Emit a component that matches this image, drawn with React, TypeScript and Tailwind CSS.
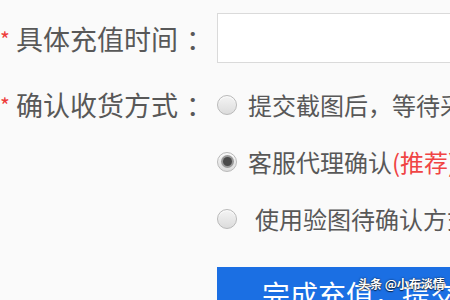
import React from "react";

function Radio({ checked }: { checked?: boolean }) {
  return (
    <span className="relative flex h-[20px] w-[20px] shrink-0 items-center justify-center rounded-full border border-[#b9b9b9] bg-[linear-gradient(180deg,#f4f4f4,#dcdcdc)] shadow-[inset_0_1px_1px_rgba(255,255,255,0.8)]">
      {checked && <span className="h-[9px] w-[9px] rounded-full bg-[#4a4a4a] shadow-[0_0_0_2px_#9a9a9a]" />}
    </span>
  );
}

function Label({ text }: { text: string }) {
  return (
    <div className="flex items-center whitespace-nowrap">
      <span className="w-[16px] translate-y-[1px] text-[21px] leading-none text-[#ee3b3b]">*</span>
      <span className="text-[27px] leading-none text-[#585858]">{text}</span>
      <span className="pl-[8px] text-[27px] leading-none text-[#585858]">：</span>
    </div>
  );
}

export default function App() {
  return (
    <div className="relative h-[300px] w-[450px] overflow-hidden bg-[#fafafa] font-['Noto_Sans_CJK_SC','Noto_Sans',sans-serif] text-[#585858]">
      <div className="grid grid-cols-[217px_1fr] pt-[13px]">
        <div className="flex h-[50px] items-center">
          <Label text="具体充值时间" />
        </div>
        <div className="h-[50px] w-[260px] border border-[#dadada] bg-white" />

        <div className="mt-[13px] flex h-[57px] items-center">
          <Label text="确认收货方式" />
        </div>
        <div className="mt-[13px] flex flex-col">
          <div className="flex h-[57px] items-center whitespace-nowrap">
            <Radio />
            <span className="ml-[11px] text-[24px] leading-none">提交截图后，等待采购确认</span>
          </div>
          <div className="flex h-[57px] items-center whitespace-nowrap">
            <Radio checked />
            <span className="ml-[11px] text-[24px] leading-none">
              客服代理确认<span className="text-[#f04444]">(推荐)</span>
            </span>
          </div>
          <div className="flex h-[57px] items-center whitespace-nowrap">
            <Radio />
            <span className="ml-[18px] text-[24px] leading-none">使用验图待确认方式</span>
          </div>
        </div>

        <div />
        <div className="mt-[20px] flex h-[60px] w-[260px] items-start whitespace-nowrap bg-[#1b6fe3] pl-[45px] pt-[13px]">
          <span className="text-[28px] leading-none text-white">完成充值，提交订单</span>
        </div>
      </div>
      <div className="absolute left-[358px] top-[278px] whitespace-nowrap text-[12px] font-bold leading-none text-white [text-shadow:0_0_2px_rgba(0,0,0,0.8),0_1px_1px_rgba(0,0,0,0.6)]">
        头条 @小布淡情
      </div>
    </div>
  );
}
